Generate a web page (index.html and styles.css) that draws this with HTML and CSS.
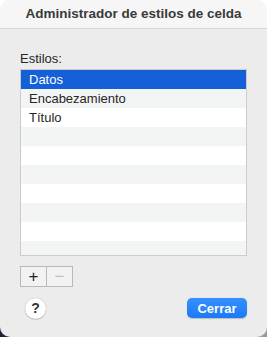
FILE: index.html
```html
<!DOCTYPE html>
<html>
<head>
    <meta charset="UTF-8">
    <title>Administrador de estilos de celda</title>
    <link rel="stylesheet" href="styles.css">
</head>
<body>
    <div class="window">
        <div class="titlebar">Administrador de estilos de celda</div>

        <div class="content">
            <p class="label">Estilos:</p>

            <div class="list">
                <div class="row selected">Datos</div>
                <div class="row">Encabezamiento</div>
                <div class="row">Título</div>
                <div class="row"></div>
                <div class="row"></div>
                <div class="row"></div>
                <div class="row"></div>
                <div class="row"></div>
                <div class="row"></div>
                <div class="row"></div>
            </div>

            <div class="segmented">
                <button class="seg">+</button>
                <button class="seg off">&minus;</button>
            </div>

            <div class="footer">
                <button class="help">?</button>
                <button class="primary">Cerrar</button>
            </div>
        </div>
    </div>
</body>
</html>
```

FILE: styles.css
```css
*{
    padding: 0;
    margin: 0;
    box-sizing: border-box;
}

body{
    width: 267px;
    height: 337px;
    overflow: hidden;
    background: linear-gradient(to right, #1c2436 0, #1c2436 6%, #d0d0d0 40%, #9a9a9a 100%) left bottom / 100% 20px no-repeat, #fff;
    font-family: "Liberation Sans", Arial, sans-serif;
    color: #262626;
}

.window{
    height: 337px;
    background: #ececec;
    border-radius: 10px;
    overflow: hidden;
}

.titlebar{
    height: 29px;
    line-height: 28px;
    background: #f6f6f6;
    border-bottom: 1px solid #d6d6d6;
    text-align: center;
    font-size: 13.5px;
    font-weight: bold;
    color: #3a3a3a;
}

.content{
    padding: 0 20px;
}

.label{
    padding-top: 22px;
    height: 40px;
    line-height: 16px;
    font-size: 13px;
}

.list{
    height: 187px;
    border: 1px solid #cbcbcb;
    background: #fff;
    overflow: hidden;
}

.row{
    height: 19px;
    line-height: 19px;
    padding-left: 8px;
    font-size: 13px;
    color: #262626;
}

.row:nth-child(even){
    background: #f3f4f4;
}

.row.selected{
    background: #155fd8;
    color: #fff;
}

.segmented{
    display: flex;
    margin-top: 10px;
    width: 53px;
    height: 21px;
    border: 1px solid #b9b9b9;
}

.seg{
    flex: 1;
    border: none;
    background: #f2f2f2;
    font-family: "Liberation Sans", Arial, sans-serif;
    font-size: 17px;
    line-height: 18px;
    color: #222;
}

.seg + .seg{
    border-left: 1px solid #b9b9b9;
}

.seg.off{
    color: #c0c0c0;
}

.footer{
    display: flex;
    justify-content: space-between;
    align-items: center;
    margin-top: 10px;
    height: 22px;
}

.help{
    width: 21px;
    height: 21px;
    margin-left: 5px;
    border: none;
    border-radius: 50%;
    background: #fff;
    box-shadow: 0 0 1px rgba(0,0,0,0.35), 0 1px 1px rgba(0,0,0,0.15);
    font-family: "Liberation Sans", Arial, sans-serif;
    font-size: 14px;
    font-weight: bold;
    color: #333;
}

.primary{
    width: 60px;
    height: 20px;
    border: none;
    border-radius: 5px;
    background: linear-gradient(to bottom, #3590ff, #1b7af5);
    box-shadow: 0 0.5px 1px rgba(0,0,0,0.2);
    font-family: "Liberation Sans", Arial, sans-serif;
    font-size: 13px;
    font-weight: bold;
    color: #fff;
}
```
